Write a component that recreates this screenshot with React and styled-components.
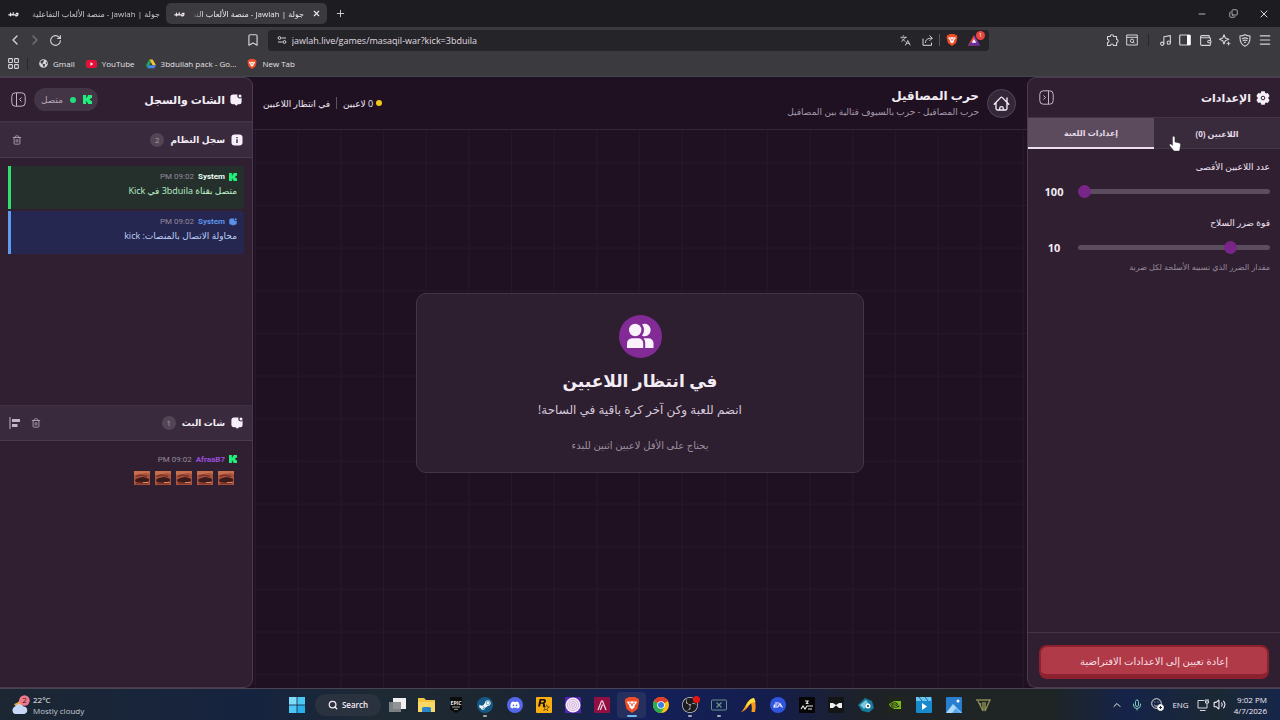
import React, { useState } from 'react';
import styled, { createGlobalStyle, css } from 'styled-components';
import { FaSteamSymbol, FaDiscord, FaGlobeAmericas } from 'react-icons/fa';
import { SiNvidia, SiEa, SiObsstudio, SiRockstargames } from 'react-icons/si';
import {
    ChevronLeft, ChevronRight, ChevronUp, RotateCw, Bookmark, Languages, Music, Wallet,
    Menu, X, Minus, Plus, Trash2, Search, Mic, Volume2, Copy, LayoutGrid,
} from 'lucide-react';

//styling
const GlobalStyle = createGlobalStyle`
    * { box-sizing: border-box; }
    body {
        margin: 0;
        background: #1f1122;
        color: #f3ecf5;
        font-family: "Open Sans", "Noto Sans", "DejaVu Sans", sans-serif;
        font-size: 10px;
    }
    button, input { font: inherit; color: inherit; }
    button { border: 0; padding: 0; background: none; cursor: pointer; }
    a { color: inherit; text-decoration: none; }
    h1, h2, h3, p { margin: 0; }
    svg { display: block; flex: none; }
`
const Screen = styled.div`
    display: flex;
    flex-direction: column;
    height: 100vh;
    overflow: hidden;
`
const center = css`
    display: flex;
    align-items: center;
`

//browser
const TabStrip = styled.div`
    ${center}
    height: 27px;
    flex: none;
    background: #1d1c20;
    color: #c8c6cc;
`
const Tab = styled.button`
    ${center}
    gap: 8px;
    height: 21px;
    width: ${props => props.$active ? '161px' : '166px'};
    padding: 0 6px 0 8px;
    border-radius: 5px;
    font-size: 8px;
    color: ${props => props.$active ? '#ece9ee' : '#c8c6cc'};
    background: ${props => props.$active ? '#3b3a3e' : 'transparent'};
`
const TabTitle = styled.span`
    flex: 1;
    min-width: 0;
    overflow: hidden;
    white-space: nowrap;
    direction: rtl;
    text-align: right;
    mask-image: linear-gradient(to right, transparent, #000 10px);
`
const IconButton = styled.button`
    display: grid;
    place-items: center;
    width: ${props => props.$size || 20}px;
    height: ${props => props.$size || 20}px;
    color: ${props => props.$color || '#d6d3da'};
`
const WindowButtons = styled.div`
    ${center}
    gap: 11px;
    margin-left: auto;
    padding-right: 6px;
`
const Toolbar = styled.div`
    ${center}
    height: 26px;
    flex: none;
    padding: 0 5px;
    background: #3b3a3e;
`
const BookmarkButton = styled(IconButton)`
    margin-left: 14%;
`
const UrlBox = styled.div`
    ${center}
    flex: 1;
    height: 21px;
    margin: 0 113px 0 5px;
    padding: 0 4px;
    border-radius: 4px;
    background: #252428;
    color: #d6d3da;
`
const UrlInput = styled.input`
    flex: 1;
    min-width: 0;
    padding: 0;
    border: 0;
    outline: 0;
    background: none;
    font-size: 9px;
    color: #e0dde3;
`
const Rewards = styled.span`
    position: relative;
    margin: 0 5px 0 4px;
`
const RewardsBadge = styled.span`
    position: absolute;
    top: -4px;
    right: -5px;
    width: 9px;
    height: 9px;
    border-radius: 50%;
    background: #e8453c;
    color: #fff;
    font-size: 6px;
    line-height: 9px;
    text-align: center;
`
const Divider = styled.span`
    width: 1px;
    height: 12px;
    margin: 0 ${props => props.$gap || 0}px;
    background: ${props => props.$color || '#59575e'};
`
const Bookmarks = styled.div`
    ${center}
    gap: 11px;
    height: 24px;
    flex: none;
    padding: 0 3px 2px;
    background: #3b3a3e;
    border-bottom: 1px solid #47434c;
`
const BookmarkLink = styled.a`
    ${center}
    gap: 5px;
    font-size: 8px;
    font-weight: 500;
    color: #e6e3e9;
`
const BookmarkApps = styled.div`
    ${center}
    gap: 4px;
`

//game page
const Page = styled.div`
    display: flex;
    flex: 1;
    min-height: 0;
    background: #1f1122;
`
const Panel = styled.aside`
    display: flex;
    flex-direction: column;
    flex: none;
    width: 253px;
    border: 1px solid #4b3b50;
    border-radius: ${props => props.$side === 'right' ? '0 9px 9px 0' : '9px 0 0 9px'};
    border-${props => props.$side === 'right' ? 'left' : 'right'}-width: 0;
    background: #2f1f31;
    overflow: hidden;
`
const PanelHeader = styled.header`
    ${center}
    justify-content: space-between;
    height: ${props => props.$height}px;
    padding: 0 10px;
    border-bottom: 1px solid #44334a;
`
const PanelTitle = styled.h2`
    ${center}
    gap: 5px;
    font-size: 11px;
    line-height: 20px;
`
const HeaderGroup = styled.div`
    ${center}
    gap: ${props => props.$gap}px;
`
const Connected = styled.span`
    ${center}
    gap: 7px;
    height: 23px;
    padding: 0 6px 0 7px;
    border-radius: 12px;
    background: #433546;
    color: #b5a9b8;
    font-size: 9px;
`
const Dot = styled.i`
    width: 6px;
    height: 6px;
    border-radius: 50%;
    background: ${props => props.$color};
`
const Section = styled.section`
    display: flex;
    flex-direction: column;
    flex: ${props => props.$grow} 1 0;
    min-height: 0;
`
const SectionHeader = styled.header`
    ${center}
    justify-content: space-between;
    flex: none;
    height: 36px;
    padding: 0 9px;
    background: #3a2a3d;
    border-top: 1px solid #403044;
    border-bottom: 1px solid #4b3b4f;
`
const SectionTitle = styled.h3`
    ${center}
    gap: 6px;
    font-size: 9px;
    line-height: 18px;
`
const Count = styled.span`
    width: 14px;
    height: 14px;
    border-radius: 50%;
    background: #534556;
    color: #a99dac;
    font-size: 8px;
    font-weight: 400;
    line-height: 14px;
    text-align: center;
`
const Messages = styled.ul`
    display: flex;
    flex-direction: column;
    gap: 2px;
    margin: 0;
    padding: 8px;
    list-style: none;
`
const tones = {
    green: { back: '#25302d', line: '#2fe06f', name: '#e9fff1', text: '#bdf0c9' },
    blue: { back: '#262750', line: '#5c9bf0', name: '#5c93ea', text: '#bcd0f5' },
    plain: { back: 'transparent', line: 'transparent', name: '#9a4fd8', text: '#f3ecf5' },
}
const Message = styled.li`
    display: flex;
    flex-direction: column;
    height: 43px;
    padding: 4px 7px;
    border-left: 3px solid ${props => tones[props.$tone].line};
    border-radius: 0 3px 3px 0;
    background: ${props => tones[props.$tone].back};
    color: ${props => tones[props.$tone].text};
`
const MessageMeta = styled.div`
    ${center}
    gap: 4px;
    line-height: 13px;
    font-family: Roboto, "DejaVu Sans", sans-serif;
    font-size: 8px;
    color: #94899a;

    b { color: ${props => tones[props.$tone].name}; }
`
const MessageText = styled.p`
    font-size: 9px;
    line-height: 16px;
`
const Emotes = styled.div`
    ${center}
    gap: 5px;
    padding: 5px 3px;
`

const Main = styled.main`
    display: flex;
    flex-direction: column;
    flex: 1;
    min-width: 0;
    background-color: #1f1122;
    background-image:
        linear-gradient(to right, #26172a 1px, transparent 1px),
        linear-gradient(to bottom, #26172a 1px, transparent 1px);
    background-size: calc(100vw / 30) calc(100vw / 30);
    background-position: 2px 0;
`
const GameHeader = styled.header`
    ${center}
    justify-content: space-between;
    height: 53px;
    flex: none;
    padding: 0 11px 0 10px;
    background: #1f1122;
    border-bottom: 1px solid #35263a;
`
const GameName = styled.div`
    ${center}
    gap: 8px;
`
const HomeButton = styled.a`
    display: grid;
    place-items: center;
    width: 29px;
    height: 29px;
    border: 1px solid #55475a;
    border-radius: 50%;
    background: #34273a;
`
const GameTitle = styled.h1`
    font-size: 12px;
    line-height: 18px;
`
const GameText = styled.p`
    font-size: 9px;
    line-height: 14px;
    color: #a599aa;
`
const Status = styled.div`
    ${center}
    gap: 6px;
    font-size: 9px;
    color: #f0e6f3;
`
const Players = styled.span`
    ${center}
    gap: 3px;
`
const Arena = styled.div`
    display: grid;
    place-items: center;
    flex: 1;
    padding-bottom: 53px;
`
const WaitCard = styled.section`
    display: flex;
    flex-direction: column;
    align-items: center;
    width: 58%;
    padding: 21px 16px 18px;
    border: 1px solid #43344a;
    border-radius: 10px;
    background: #2d1e30;
    text-align: center;
`
const WaitIcon = styled.span`
    display: grid;
    place-items: center;
    width: 43px;
    height: 43px;
    border-radius: 50%;
    background: #822b96;
`
const WaitTitle = styled.h2`
    margin-top: 8px;
    font-size: 17px;
    line-height: 30px;
`
const WaitText = styled.p`
    margin-top: 4px;
    font-size: 12px;
    line-height: 20px;
    color: #d6c9da;
`
const WaitNote = styled.p`
    margin-top: 16px;
    font-size: 10px;
    line-height: 18px;
    color: #9c909f;
`

//settings
const TabList = styled.div`
    display: flex;
    height: 31px;
`
const SettingsTab = styled.button`
    flex: 1;
    font-size: 8px;
    font-weight: 700;
    color: #e5dbe8;
    background: ${props => props.$active ? '#5b4b5d' : '#392a3c'};
    border-bottom: ${props => props.$active ? '2px solid #ecdff2' : '1px solid #46364a'};
`
const Settings = styled.div`
    display: flex;
    flex-direction: column;
    flex: 1;
    gap: 11px;
    padding: 9px 10px;
`
const FieldLabel = styled.label`
    display: block;
    font-size: 9px;
    line-height: 18px;
    color: #f0e4f4;
`
const SliderRow = styled.div`
    ${center}
    gap: 8px;
    height: 24px;
    margin-top: 3px;
`
const Slider = styled.input`
    flex: 1;
    min-width: 0;
    height: 14px;
    margin: 0;
    appearance: none;
    background: transparent;

    &::-webkit-slider-runnable-track {
        height: 5px;
        border-radius: 3px;
        background: #5c4d5e;
    }
    &::-webkit-slider-thumb {
        appearance: none;
        width: 13px;
        height: 13px;
        margin-top: -4px;
        border-radius: 50%;
        background: #782587;
    }
`
const SliderValue = styled.output`
    width: 32px;
    font-size: 11px;
    font-weight: 700;
    text-align: center;
`
const Help = styled.p`
    font-size: 8px;
    line-height: 16px;
    color: #978a9a;
`
const PanelFooter = styled.footer`
    padding: 12px 11px 8px;
    border-top: 1px solid #44334a;
`
const ResetButton = styled.button`
    display: block;
    width: 100%;
    height: 34px;
    border: 2px solid #8c2130;
    border-bottom-width: 5px;
    border-radius: 8px;
    background: #b13a48;
    color: #f7dfe2;
    font-size: 10px;
`
const Pointer = styled.svg`
    position: absolute;
    left: 1169px;
    top: 136px;
    pointer-events: none;
`

//taskbar
const Taskbar = styled.footer`
    ${center}
    height: 32px;
    flex: none;
    border-top: 1px solid #4a4452;
    background: linear-gradient(to right, #1c2733, #16233f 20%, #1e2a33 30%, #1c2632 40%, #14205a 50%, #141d4d 60%, #1e2226 68%, #1f2524 82%, #15234a 88%, #1b2833 95%, #15264a);
`
const Weather = styled.button`
    ${center}
    gap: 3px;
    width: 287px;
    padding-left: 11px;
    font-size: 8px;
    line-height: 11px;
    text-align: left;
    color: #f0f0f3;

    small { display: block; font-size: 8px; color: #c6cad2; }
`
const SearchButton = styled.button`
    ${center}
    justify-content: center;
    gap: 4px;
    width: 66px;
    height: 22px;
    margin-left: 8px;
    border-radius: 11px;
    background: #2b323f;
    font-size: 8px;
    font-weight: 600;
`
const Apps = styled.div`
    display: grid;
    grid-template-columns: repeat(21, 1fr);
    width: 48%;
    margin-left: 2px;
`
const AppButton = styled.button`
    display: flex;
    flex-direction: column;
    align-items: center;
    justify-content: flex-end;
    gap: 2px;
    height: 26px;
    padding-bottom: 1px;
    border-radius: 4px;
    background: ${props => props.$open ? '#26305f' : 'transparent'};

    &::after {
        content: '';
        width: ${props => props.$open ? 10 : 4}px;
        height: 2px;
        border-radius: 1px;
        background: ${props => props.$open ? '#69b7ee' : props.$running ? '#a5a8b5' : 'transparent'};
    }
`
const Tray = styled.div`
    ${center}
    margin-left: auto;
    gap: 8px;
    padding-right: 13px;
    font-size: 8px;
    line-height: 11px;
    white-space: nowrap;
`
const TrayGroup = styled.span`
    ${center}
    gap: 4px;
`
const Clock = styled.time`
    text-align: right;
`
//////////////////////////////////////////////

//icons
const KickIcon = ({ size = 9 }) => (
    <svg width={size} height={size} viewBox='0 0 9 9' fill='#1ff07a'>
        <path d='M0 0h3.200v2.800h.8V1.500h.9V0H9v3H7.700v1h-.9v1h.9v1H9v3H4.900V7.500H4V6.200h-.8V9H0z'/>
    </svg>
)
const ChatIcon = ({ size = 12, color = '#f7f0fa' }) => (
    <svg width={size} height={size} viewBox='0 0 12 12' fill={color}>
        <path d='M3 .6h4.700a2.300 2.300 0 0 0 1.300 3.600 2.300 2.300 0 0 0 2.600-.5V8a2.200 2.200 0 0 1-2.200 2.200H8L6.200 11.800 4.600 10.200H3A2.600 2.600 0 0 1 .4 7.600V3.200A2.600 2.600 0 0 1 3 .6z'/>
        <circle cx='10' cy='1.900' r='1.500'/>
    </svg>
)
const InfoIcon = () => (
    <svg width='12' height='12' viewBox='0 0 12 12'>
        <rect x='.5' y='.5' width='11' height='11' rx='3' fill='#f7f0fa'/>
        <path d='M6 3v1.200M6 5.300V9' stroke='#3a2a3d' strokeWidth='1.400'/>
    </svg>
)
const GearIcon = () => (
    <svg width='14' height='14' viewBox='0 0 14 14'>
        <path fill='#f7f0fa' d='M5.300.3h3.400l.5 1.800.8.5 1.800-.5 1.800 2.900-1.300 1.400v1.200l1.300 1.400-1.800 2.900-1.800-.5-.8.5-.5 1.800H5.300l-.5-1.800-.8-.5-1.800.5L.4 9l1.300-1.400V6.400L.4 5l1.800-2.900 1.800.5.8-.5z'/>
        <circle cx='7' cy='7' r='1.800' fill='none' stroke='#2f1f31' strokeWidth='1'/>
    </svg>
)
const CollapseIcon = ({ flip }) => (
    <svg width='15' height='15' viewBox='0 0 15 15' fill='none' stroke='#c3b6c7' strokeWidth='1'>
        <rect x='.8' y='.8' width='13.400' height='13.400' rx='3.500'/>
        {flip ? <path d='M9.500 1v13M4.500 5.500l2 2-2 2'/> : <path d='M5.500 1v13M10.500 5.500l-2 2 2 2'/>}
    </svg>
)
const HomeIcon = () => (
    <svg width='17' height='17' viewBox='0 0 17 17' fill='none' stroke='#f7f0fa' strokeWidth='1.300' strokeLinecap='round' strokeLinejoin='round'>
        <path d='M1.200 9.300 7.600 2.600a1.300 1.300 0 0 1 1.800 0l6.400 6.700M3 7.800v5.700a1.500 1.500 0 0 0 1.500 1.500h8a1.500 1.500 0 0 0 1.500-1.500V2.800M6.700 15v-1.500a1.800 1.800 0 0 1 3.600 0V15'/>
    </svg>
)
const PlayersIcon = () => (
    <svg width='28' height='28' viewBox='0 0 28 28' fill='#f9f2fb'>
        <circle cx='9.200' cy='8' r='6.200'/>
        <path d='M16 2.300a6.200 6.200 0 1 1 0 11.400 9 9 0 0 0 0-11.400z'/>
        <path d='M1 26v-4.500a5 5 0 0 1 5-5.200h6.500a4.600 4.600 0 0 1 4.700 4.700v5z'/>
        <path d='M17.500 16.300h5a5 5 0 0 1 5 5V26h-8.300v-5.500a6.500 6.500 0 0 0-1.700-4.200z'/>
    </svg>
)
const SortIcon = () => (
    <svg width='12' height='12' viewBox='0 0 12 12' fill='#c3b6c7'>
        <path d='M.5 0h1v12h-1zM3 2h8v3H3zM3 7h5.500v3H3z'/>
    </svg>
)
const Emote = () => (
    <svg width='16' height='14' viewBox='0 0 16 14'>
        <rect width='16' height='14' fill='#a9523c'/>
        <path d='M0 0h16v3l-4-1-5 1-7 1z' fill='#c7704f'/>
        <path d='M1 9c3-3 6-2 7-3 3 0 5 1 7 2v2c-4 2-9 2-13 1z' fill='#3b1a1c'/>
        <path d='M2 5.500l4-1.500 7 1.500M2 12.500h12' stroke='#7c3429' strokeWidth='1.500' fill='none'/>
        <path d='M9 11.500h5' stroke='#d98a66'/>
    </svg>
)
const SiteLogo = () => (
    <svg width='11' height='6' viewBox='0 0 11 6' fill='none' stroke='#f0e6f4' strokeWidth='1.300' strokeLinecap='round'>
        <path d='M.8 3.800h2.400M2.500 2.200v2.600M3.500 3.800c1 .4 1.800 0 1.800-2M5.500 3.800h2.800M8.300 2.300h1.500v1.700c-.6 1-1.300 1-2 .8'/>
    </svg>
)
const DriveIcon = () => (
    <svg width='10' height='10' viewBox='0 0 12 11'>
        <path d='M4 0h4l4 7H8z' fill='#fbc02d'/>
        <path d='M4 0 0 7l2 3.500 4-7z' fill='#1fa463'/>
        <path d='M2 10.500 4 7h8l-2 3.500z' fill='#4688f4'/>
    </svg>
)
const YouTubeIcon = () => (
    <svg width='11' height='8' viewBox='0 0 11 8'>
        <rect width='11' height='8' rx='2' fill='#e4103c'/>
        <path d='M4.500 2.300v3.400l2.800-1.700z' fill='#fff'/>
    </svg>
)
const SiteInfoIcon = () => (
    <svg width='10' height='10' viewBox='0 0 10 10' fill='none' stroke='currentColor' strokeWidth='1'>
        <circle cx='2.500' cy='3' r='1.400'/><path d='M4.500 3H9M1 7h4.500'/><circle cx='7.500' cy='7' r='1.400'/>
    </svg>
)
const ShareIcon = () => (
    <svg width='11' height='11' viewBox='0 0 11 11' fill='none' stroke='currentColor' strokeWidth='1' strokeLinecap='round' strokeLinejoin='round'>
        <path d='M1 4v6.300h8.500V8M3.500 7.500c0-3 2-4.300 6.500-4.300M7.800.8l2.400 2.400-2.400 2.400'/>
    </svg>
)
const TriangleIcon = () => (
    <svg width='12' height='11' viewBox='0 0 12 11'>
        <path d='M6 0 0 10.500h6z' fill='#ef4a3c'/><path d='M6 0v10.500h6z' fill='#a23bb5'/>
        <path d='M0 10.500h12L9 7H3z' fill='#6b2fa0'/><path d='M6 4 3.800 7.800h4.400z' fill='#fff'/>
    </svg>
)
const PuzzleIcon = () => (
    <svg width='13' height='13' viewBox='0 0 13 13' fill='none' stroke='currentColor' strokeWidth='1.100' strokeLinejoin='round'>
        <path d='M1.500 2.500h2.700a1.700 1.700 0 0 1 3.400 0h3v3a1.500 1.500 0 0 1 0 3v3H7.500a1.500 1.500 0 0 0-3 0h-3v-3a1.500 1.500 0 0 0 0-3z'/>
    </svg>
)
const FindIcon = () => (
    <svg width='12' height='12' viewBox='0 0 12 12' fill='none' stroke='currentColor' strokeWidth='1'>
        <path d='M.7 1h10.600v10H.7zM.7 3.300h10.600'/><circle cx='6' cy='6.800' r='1.700'/><path d='m7.300 8 1.300 1.300'/>
    </svg>
)
const SidebarIcon = () => (
    <svg width='12' height='12' viewBox='0 0 12 12'>
        <rect x='.7' y='1' width='10.600' height='10' rx='1' fill='none' stroke='currentColor' strokeWidth='1.200'/>
        <path d='M8 1h3.300v10H8z' fill='#fff'/>
    </svg>
)
const SparkIcon = () => (
    <svg width='12' height='12' viewBox='0 0 12 12' fill='none' stroke='currentColor' strokeWidth='1.100' strokeLinejoin='round'>
        <path d='M5 .8 6.300 4 9.800 5.300 6.300 6.700 5 10 3.700 6.700.5 5.300 3.700 4z'/><path d='m9.500 7.300.6 1.600 1.600.6-1.600.6-.6 1.600-.6-1.600-1.600-.6 1.600-.6z' fill='currentColor' strokeWidth='.2'/>
    </svg>
)
const ShieldIcon = () => (
    <svg width='12' height='13' viewBox='0 0 12 13' fill='none' stroke='currentColor' strokeWidth='1.100' strokeLinecap='round'>
        <path d='M6 .7c2 1 3.400 1.200 5 1.300.3 5-.8 8.500-5 10.300C1.800 10.500.7 7 1 2 2.600 1.900 4 1.700 6 .7zM3.300 4.700c1.700-1 3.700-1 5.400 0M4.200 6.600c1.200-.7 2.400-.7 3.600 0M5.600 8.400h.8'/>
    </svg>
)
const WeatherIcon = () => (
    <svg width='19' height='20' viewBox='0 0 19 20'>
        <path d='M9 2c0 4-2 6-6 7 2 4 8 4 10-1z' fill='#f0a844'/>
        <path d='M4 19a4 4 0 0 1 0-7.500C6 8 11 8 12.500 11.500c5 0 5 7.500 0 7.500z' fill='#c6d8f5'/>
        <circle cx='13.500' cy='5.500' r='5.200' fill='#f0788c'/>
        <text x='13.500' y='8.300' textAnchor='middle' fontSize='8' fill='#3a1420'>2</text>
    </svg>
)
const WindowsIcon = () => (
    <svg width='16' height='16' viewBox='0 0 16 16' fill='#4cc6f2'>
        <path d='M0 0h7.600v7.600H0z' fill='#7edcf8'/><path d='M8.400 0H16v7.600H8.400z'/><path d='M0 8.400h7.600V16H0z'/><path d='M8.400 8.400H16V16H8.400z' fill='#2aaeea'/>
    </svg>
)
const BraveIcon = ({ size }) => (
    <svg width={size} height={size} viewBox='0 0 16 16'>
        <path d='M4.500 0h7l1.500 1.500 1.500-.2.700 3L13.500 12 8 16 2.500 12 .8 4.300l.7-3 1.500.2z' fill='#ee4d27'/>
        <path d='m3.500 4.300 3 .4L8 4l1.500.7 3-.4.3 1.500-2.300 3 .3 1.200L8 12.500 5.200 10l.3-1.200-2.300-3z' fill='#fff'/>
        <path d='m5 6 2.200.6L8 9l.8-2.400L11 6' fill='none' stroke='#ee4d27' strokeWidth='.8'/>
    </svg>
)
const Tile = ({ back, round, children }) => (
    <svg width='16' height='16' viewBox='0 0 16 16'>
        <rect width='16' height='16' rx={round ? 8 : 1} fill={back}/>
        {children}
    </svg>
)

const apps = [
    { name: 'Task View', icon: <svg width='17' height='16' viewBox='0 0 17 16'><rect x='4' y='1' width='13' height='11' fill='#f0f0f0'/><rect x='0' y='5' width='12' height='10' fill='#85898d' opacity='.9'/></svg> },
    { name: 'File Explorer', icon: <svg width='17' height='16' viewBox='0 0 17 16'><path d='M0 1h6l2 2h9v12H0z' fill='#f6c544'/><path d='M0 5h17v10H0z' fill='#fbd866'/><path d='M4 15v-3.500A1.500 1.500 0 0 1 5.500 10h6a1.500 1.500 0 0 1 1.500 1.500V15z' fill='#2987c9'/></svg> },
    { name: 'Epic Games', icon: <svg width='14' height='16' viewBox='0 0 14 16'><path d='M1 0h12v12.500L7 16l-6-3.500z' fill='#0c0c0d'/><text x='7' y='7.500' textAnchor='middle' fontSize='5' fontWeight='700' fill='#f0f0f0'>EPIC</text><path d='M3 10h8M5 12.300h4' stroke='#c8c8c8' strokeWidth='.8'/></svg> },
    { name: 'Steam', running: true, icon: <Tile back='#155a86' round><g transform='translate(1.500 1.500)'><FaSteamSymbol size={13} color='#eef6fb'/></g></Tile> },
    { name: 'Discord', icon: <Tile back='#5467ea' round><g transform='translate(3 3)'><FaDiscord size={10} color='#fff'/></g></Tile> },
    { name: 'Rockstar Games', icon: <Tile back='#f7ae13'><g transform='translate(2 2)'><SiRockstargames size={12} color='#161208'/></g></Tile> },
    { name: 'Fingerprint', icon: <Tile back='#5626b5'><circle cx='8' cy='8' r='7.500' fill='#f5edfa'/><g fill='none' stroke='#b98cc6' strokeWidth='.6'><circle cx='8' cy='8' r='5.500'/><circle cx='8' cy='8' r='3.500'/><circle cx='8' cy='8' r='1.500'/></g></Tile> },
    { name: 'Armoury', icon: <Tile back='#930f42'><path d='m4 13 3.500-9h1L12 13M8.500 7.500 6.300 13' fill='none' stroke='#f5dbe4' strokeWidth='1.200'/></Tile> },
    { name: 'Brave', open: true, icon: <BraveIcon size={16}/> },
    { name: 'Chrome', icon: <svg width='16' height='16' viewBox='0 0 16 16'><circle cx='8' cy='8' r='8' fill='#fbc116'/><path d='M8 8 1.100 4A8 8 0 0 1 14.900 4z' fill='#e33b2e'/><path d='M8 8 1.100 4A8 8 0 0 0 8 16l3.400-6z' fill='#2da94f'/><circle cx='8' cy='8' r='3.800' fill='#fff'/><circle cx='8' cy='8' r='3' fill='#3c7de8'/></svg> },
    { name: 'OBS Studio', running: true, icon: <svg width='20' height='17' viewBox='0 0 20 17'><g transform='translate(2 1)'><circle cx='8' cy='8' r='8' fill='#1b1b1d'/><SiObsstudio size={16} color='#c8c8ca'/></g><circle cx='16.500' cy='3.500' r='3.500' fill='#e81414'/></svg> },
    { name: 'Xbox Bar', running: true, icon: <svg width='16' height='16' viewBox='0 0 16 16' fill='none' stroke='#659584'><rect x='.5' y='3' width='15' height='10' rx='1'/><path d='m5.500 5.500 5 5m0-5-5 5' strokeWidth='1.300'/></svg> },
    { name: 'Arc', icon: <svg width='16' height='16' viewBox='0 0 16 16'><path d='M0 15C4 13 5 2 13 1c2 4 2 9 1 14h-3.500c.5-3 .5-6-.5-9C7.500 9 5 14 0 15z' fill='#fb991b'/><path d='M13 1c-5 .5-7 6-8.500 9.500C7 9 10 5 14.500 5z' fill='#fde03c'/></svg> },
    { name: 'EA', icon: <Tile back='#3154df' round><g transform='translate(3 3)'><SiEa size={10} color='#fff'/></g></Tile> },
    { name: 'Game', icon: <Tile back='#060606'><path d='M6 4h3L7.500 6.500h2M2 12l2-3 2 3 2-3h6M9 12h4' fill='none' stroke='#e9e9e9' strokeWidth='1.200'/></Tile> },
    { name: 'Mask', icon: <Tile back='#141515'><path d='M2 6h3l3 2 3-2h3v5h-3L8 8.500 5 11H2z' fill='#eee'/></Tile> },
    { name: 'Cube', icon: <svg width='16' height='16' viewBox='0 0 16 16'><path d='M0 8 7 1l7 3 2 7-5 4.500L4 14z' fill='#177a9c'/><path d='m2 8 6-5 3 4-5 5z' fill='#7cc9dc'/><circle cx='10' cy='9' r='2.500' fill='#fff'/><circle cx='10' cy='9' r='1' fill='#123'/></svg> },
    { name: 'NVIDIA', icon: <Tile back='#20261a'><g transform='translate(2 2)'><SiNvidia size={12} color='#7db91e'/></g></Tile> },
    { name: 'Clips', icon: <Tile back='#188acb'><path d='M0 0h15v4H0z' fill='#6ac7ef'/><path d='m3 0 3 4m3-4 3 4' stroke='#176d9f'/><path d='M6 6v7l5-3.500z' fill='#fff'/></Tile> },
    { name: 'Photos', icon: <Tile back='#287fd2'><path d='M0 16 7 7l9 9z' fill='#aad9fb'/><path d='m6 16 4-5 5 5z' fill='#5aa7eb'/><circle cx='12' cy='4' r='1.500' fill='#fff'/></Tile> },
    { name: 'Wings', icon: <svg width='16' height='16' viewBox='0 0 16 16' fill='none' stroke='#8b8a55' strokeWidth='1.500'><path d='M1 3h14l-5 11V5M3 4l5 10V5M5.500 6v3'/></svg> },
]

const pageTitle = 'جولة | Jawlah - منصة الألعاب التفاعلية'

const systemLog = [
    { tone: 'green', text: 'متصل بقناة 3bduila في Kick' },
    { tone: 'blue', text: 'محاولة الاتصال بالمنصات: kick' },
]

const Browser = () => {
    const [url, setUrl] = useState('jawlah.live/games/masaqil-war?kick=3bduila')

    return (
        <>
            <TabStrip>
                <Tab><SiteLogo/><TabTitle>{pageTitle}</TabTitle></Tab>
                <Tab $active>
                    <SiteLogo/><TabTitle>{pageTitle}</TabTitle><X size={9} strokeWidth={3}/>
                </Tab>
                <IconButton $size={27} aria-label='New tab'><Plus size={11}/></IconButton>
                <WindowButtons>
                    <IconButton aria-label='Minimize'><Minus size={10}/></IconButton>
                    <IconButton aria-label='Restore'><Copy size={9} style={{ transform: 'scaleY(-1)' }}/></IconButton>
                    <IconButton aria-label='Close'><X size={12}/></IconButton>
                </WindowButtons>
            </TabStrip>
            <Toolbar>
                <IconButton aria-label='Back'><ChevronLeft size={16}/></IconButton>
                <IconButton aria-label='Forward' $color='#77747b'><ChevronRight size={16}/></IconButton>
                <IconButton aria-label='Reload'><RotateCw size={13}/></IconButton>
                <BookmarkButton aria-label='Bookmark'><Bookmark size={14}/></BookmarkButton>
                <UrlBox>
                    <IconButton aria-label='Site information'><SiteInfoIcon/></IconButton>
                    <UrlInput aria-label='Address' value={url} onChange={evt => setUrl(evt.target.value)}/>
                    <IconButton aria-label='Translate'><Languages size={11}/></IconButton>
                    <IconButton $size={24} aria-label='Share'><ShareIcon/></IconButton>
                    <Divider/>
                    <IconButton $size={24} aria-label='Shields'><BraveIcon size={12}/></IconButton>
                    <Rewards><TriangleIcon/><RewardsBadge>1</RewardsBadge></Rewards>
                </UrlBox>
                <IconButton aria-label='Extensions'><PuzzleIcon/></IconButton>
                <IconButton aria-label='Find'><FindIcon/></IconButton>
                <Divider $gap={6} $color='#29282c'/>
                <IconButton aria-label='Media'><Music size={13}/></IconButton>
                <IconButton aria-label='Sidebar'><SidebarIcon/></IconButton>
                <IconButton aria-label='Wallet'><Wallet size={13}/></IconButton>
                <IconButton aria-label='Assistant'><SparkIcon/></IconButton>
                <IconButton aria-label='VPN'><ShieldIcon/></IconButton>
                <IconButton aria-label='Menu'><Menu size={14}/></IconButton>
            </Toolbar>
            <Bookmarks>
                <BookmarkApps>
                    <IconButton aria-label='Apps'><LayoutGrid size={13}/></IconButton>
                    <Divider $color='#29282c'/>
                </BookmarkApps>
                <BookmarkLink href='#gmail'><FaGlobeAmericas size={9} color='#d2d4d8'/>Gmail</BookmarkLink>
                <BookmarkLink href='#youtube'><YouTubeIcon/>YouTube</BookmarkLink>
                <BookmarkLink href='#drive'><DriveIcon/>3bdullah pack - Go...</BookmarkLink>
                <BookmarkLink href='#new'><BraveIcon size={10}/>New Tab</BookmarkLink>
            </Bookmarks>
        </>
    )
}

const SettingsPanel = () => {
    const [players, setPlayers] = useState(100)
    const [damage, setDamage] = useState(10)

    const onReset = () => {
        setPlayers(100)
        setDamage(10)
    }

    return (
        <Panel $side='left'>
            <PanelHeader $height={40}>
                <PanelTitle><GearIcon/>الإعدادات</PanelTitle>
                <IconButton $size={16} aria-label='إخفاء'><CollapseIcon flip/></IconButton>
            </PanelHeader>
            <TabList>
                <SettingsTab>اللاعبين (0)</SettingsTab>
                <SettingsTab $active>إعدادات اللعبة</SettingsTab>
            </TabList>
            <Settings>
                <div>
                    <FieldLabel htmlFor='players'>عدد اللاعبين الأقصى</FieldLabel>
                    <SliderRow>
                        <Slider id='players' type='range' min='2' max='100' value={players} onChange={evt => setPlayers(evt.target.value)}/>
                        <SliderValue htmlFor='players'>{players}</SliderValue>
                    </SliderRow>
                </div>
                <div>
                    <FieldLabel htmlFor='damage'>قوة ضرر السلاح</FieldLabel>
                    <SliderRow>
                        <Slider id='damage' type='range' min='1' max='50' value={damage} onChange={evt => setDamage(evt.target.value)}/>
                        <SliderValue htmlFor='damage'>{damage}</SliderValue>
                    </SliderRow>
                    <Help>مقدار الضرر الذي تسببه الأسلحة لكل ضربة</Help>
                </div>
            </Settings>
            <PanelFooter>
                <ResetButton onClick={onReset}>إعادة تعيين إلى الاعدادات الافتراضية</ResetButton>
            </PanelFooter>
        </Panel>
    )
}

const ChatPanel = () => (
    <Panel $side='right'>
        <PanelHeader $height={44}>
            <PanelTitle><ChatIcon/>الشات والسجل</PanelTitle>
            <HeaderGroup $gap={8}>
                <Connected><KickIcon/><Dot $color='#1fe07a'/>متصل</Connected>
                <IconButton $size={16} aria-label='إخفاء'><CollapseIcon/></IconButton>
            </HeaderGroup>
        </PanelHeader>
        <Section $grow={1}>
            <SectionHeader>
                <SectionTitle><InfoIcon/>سجل النظام<Count>2</Count></SectionTitle>
                <IconButton $size={16} $color='#b5a8b9' aria-label='مسح السجل'><Trash2 size={10}/></IconButton>
            </SectionHeader>
            <Messages>
                {systemLog.map(item => (
                    <Message key={item.tone} $tone={item.tone}>
                        <MessageMeta $tone={item.tone}>
                            {item.tone === 'green' ? <KickIcon size={8}/> : <ChatIcon size={8} color='#5c93ea'/>}
                            <b>System</b><time>09:02 PM</time>
                        </MessageMeta>
                        <MessageText>{item.text}</MessageText>
                    </Message>
                ))}
            </Messages>
        </Section>
        <Section $grow={1}>
            <SectionHeader>
                <SectionTitle><ChatIcon/>شات البث<Count>1</Count></SectionTitle>
                <HeaderGroup $gap={7}>
                    <IconButton $size={16} $color='#b5a8b9' aria-label='مسح الشات'><Trash2 size={10}/></IconButton>
                    <IconButton $size={12} aria-label='ترتيب'><SortIcon/></IconButton>
                </HeaderGroup>
            </SectionHeader>
            <Messages>
                <Message $tone='plain'>
                    <MessageMeta $tone='plain'><KickIcon size={8}/><b>AfraaB7</b><time>09:02 PM</time></MessageMeta>
                    <Emotes><Emote/><Emote/><Emote/><Emote/><Emote/></Emotes>
                </Message>
            </Messages>
        </Section>
    </Panel>
)

const Game = () => (
    <Main>
        <GameHeader>
            <GameName>
                <HomeButton href='#home' aria-label='الرئيسية'><HomeIcon/></HomeButton>
                <div>
                    <GameTitle>حرب المصاقيل</GameTitle>
                    <GameText>حرب المصاقيل - حرب بالسيوف قتالية بين المصاقيل</GameText>
                </div>
            </GameName>
            <Status>
                <Players><Dot $color='#f5c518'/>0 لاعبين</Players>
                <Divider/>
                <span>في انتظار اللاعبين</span>
            </Status>
        </GameHeader>
        <Arena>
            <WaitCard>
                <WaitIcon><PlayersIcon/></WaitIcon>
                <WaitTitle>في انتظار اللاعبين</WaitTitle>
                <WaitText>انضم للعبة وكن آخر كرة باقية في الساحة!</WaitText>
                <WaitNote>يحتاج على الأقل لاعبين اثنين للبدء</WaitNote>
            </WaitCard>
        </Arena>
    </Main>
)

const WindowsBar = () => (
    <Taskbar>
        <Weather><WeatherIcon/><span>22°C<small>Mostly cloudy</small></span></Weather>
        <IconButton aria-label='Start'><WindowsIcon/></IconButton>
        <SearchButton><Search size={10} strokeWidth={3}/>Search</SearchButton>
        <Apps>
            {apps.map(app => (
                <AppButton key={app.name} aria-label={app.name} $open={app.open} $running={app.running}>{app.icon}</AppButton>
            ))}
        </Apps>
        <Tray>
            <TrayGroup>
                <ChevronUp size={12}/>
            </TrayGroup>
            <Mic size={12} color='#7cc9bd'/>
            <svg width='13' height='13' viewBox='0 0 13 13' fill='none' stroke='#e6e6ea'>
                <circle cx='5.500' cy='5.500' r='4.800'/><path d='M3.500 4h.8M6.700 4h.8M3.300 7c1 1.300 2 1.300 3 .8'/>
                <circle cx='9.500' cy='9.500' r='3' fill='#fff'/><path d='M9.500 8v3M8 9.500h3' stroke='#1b2833'/>
            </svg>
            <span>ENG</span>
            <TrayGroup>
                <svg width='12' height='12' viewBox='0 0 12 12' fill='none' stroke='#d6d8de'>
                    <path d='M7.500 1.500H1v7.500h9V6M3 11.500h5.500M9 0v2M11 0v2M8.500 2h3v2h-3zM10 4v2'/>
                </svg>
                <Volume2 size={13}/>
            </TrayGroup>
            <Clock>9:02 PM<br/>4/7/2026</Clock>
        </Tray>
    </Taskbar>
)

const App = () => {
    return (
        <Screen>
            <GlobalStyle/>
            <Browser/>
            <Page dir='rtl' lang='ar'>
                <SettingsPanel/>
                <Game/>
                <ChatPanel/>
            </Page>
            <WindowsBar/>
            <Pointer width='12' height='16' viewBox='0 0 12 16'>
                <path d='M3.500 1.500a1.200 1.200 0 0 1 2.400 0V6l4.300 1c1 .3 1.500 1 1.300 2.200L10.500 15H5L.6 9.500c-.4-.9.700-1.800 1.600-1.200l1.300 1.200z' fill='#fff' stroke='#222' strokeWidth='.4'/>
            </Pointer>
        </Screen>
    )
}

export default App;
